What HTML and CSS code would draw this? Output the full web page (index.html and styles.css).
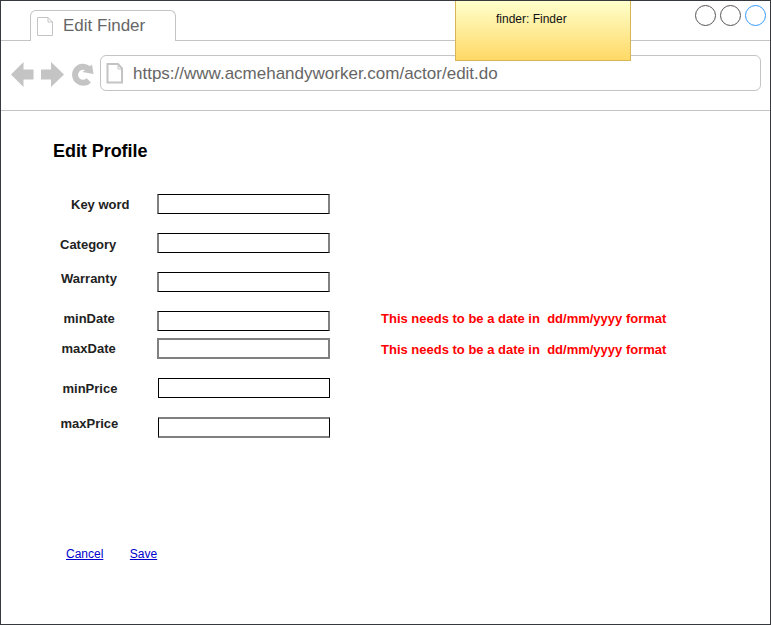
FILE: index.html
```html
<!DOCTYPE html>
<html lang="en">
<head>
<meta charset="utf-8">
<title>Edit Finder</title>
<link rel="stylesheet" href="styles.css">
</head>
<body>
<div class="window">
  <header class="tabbar">
    <div class="tab">
      <svg class="tab-icon" width="17" height="20" viewBox="0 0 17 20"><path d="M.5.5h10.500l4.500 4.500v13.500h-15zM11 .5v4.500h4.500"/></svg>
      <span>Edit Finder</span>
    </div>
    <div class="controls"><i class="dot"></i><i class="dot"></i><i class="dot active"></i></div>
  </header>
  <nav class="toolbar">
    <svg class="nav-icons" width="84" height="26" viewBox="0 0 84 26">
      <path d="M0 12.500L12.500 0v7.500H22.500v10H12.500V25zM30 7.500h10V0l13 12.500L40 25v-7.500H30z"/>
      <path class="reload" d="M77.800 18.300A8 8 0 1 1 77.200 6.600"/>
      <path d="M81 2.500l1.500 9.500-11-2z"/>
    </svg>
    <div class="address">
      <svg class="page-icon" width="18" height="21" viewBox="0 0 18 21"><path d="M1.500 1h10.500l4 4.500V19.500H1.500z"/><path class="fold" d="M12 1v5h4.500"/></svg>
      <span>https://www.acmehandyworker.com/actor/edit.do</span>
    </div>
  </nav>
  <main class="page">
    <h1>Edit Profile</h1>
    <form>
      <div class="row keyword"><label for="keyword">Key word</label><input id="keyword"></div>
      <div class="row category"><label for="category">Category</label><input id="category"></div>
      <div class="row warranty"><label for="warranty">Warranty</label><input id="warranty"></div>
      <div class="row min-date"><label for="min-date">minDate</label><input id="min-date"><span class="error">This needs to be a date in&nbsp; dd/mm/yyyy format</span></div>
      <div class="row max-date"><label for="max-date">maxDate</label><input id="max-date"><span class="error">This needs to be a date in&nbsp; dd/mm/yyyy format</span></div>
      <div class="row min-price"><label for="min-price">minPrice</label><input id="min-price"></div>
      <div class="row max-price"><label for="max-price">maxPrice</label><input id="max-price"></div>
    </form>
    <div class="actions"><a href="#">Cancel</a><a href="#">Save</a></div>
  </main>
  <aside class="note">finder: Finder</aside>
</div>
</body>
</html>
```
FILE: styles.css
```css
* { box-sizing: border-box; }
body {
  margin: 0;
  background: #fff;
  font-family: "Liberation Sans", Arial, sans-serif;
}
.window {
  position: relative;
  width: 771px;
  height: 625px;
  border: 1px solid #36393d;
  overflow: hidden;
}
.tabbar {
  display: flex;
  justify-content: space-between;
  height: 40px;
  padding: 9px 4px 0 29px;
  border-bottom: 1px solid #c4c4c4;
}
.tab {
  display: flex;
  width: 146px;
  height: 31px;
  padding: 6px 0 0 6px;
  border: 1px solid #c4c4c4;
  border-bottom: 0;
  border-radius: 6px 6px 0 0;
  background: #fff;
  color: #666;
  font-size: 17px;
  line-height: 19px;
}
.tab span { margin: -1px 0 0 9px; }
.tab-icon { fill: none; stroke: #c4c4c4; }
.controls { display: flex; gap: 4px; margin-top: -5px; }
.dot {
  width: 21px;
  height: 21px;
  border: 1px solid #555;
  border-radius: 50%;
}
.dot.active { border-color: #3399ff; }
.toolbar {
  display: flex;
  height: 70px;
  padding: 14px 9px 0 10px;
  border-bottom: 1px solid #c4c4c4;
}
.nav-icons { margin: 7px 4px 0 0; fill: #c4c4c4; }
.nav-icons .reload { fill: none; stroke: #c4c4c4; stroke-width: 6; }
.address {
  display: flex;
  flex: 1;
  height: 36px;
  margin-left: 1px;
  padding: 7px 0 0 5px;
  border: 1px solid #c4c4c4;
  border-radius: 6px;
  color: #666;
  font-size: 17px;
  line-height: 19px;
}
.address span { margin: 1px 0 0 9px; }
.page-icon { fill: none; stroke: #c4c4c4; stroke-width: 2; }
.page-icon .fold { stroke-width: 1; }
.page { padding: 30px 0 0 52px; }
h1 {
  height: 53px;
  margin: 0;
  font-size: 18px;
  line-height: 20px;
  letter-spacing: -0.05px;
}
.row { display: flex; align-items: flex-start; height: 20px; }
.row label {
  flex: none;
  width: 104px;
  padding-left: 8px;
  color: #222;
  font-size: 13px;
  font-weight: bold;
  line-height: 15px;
}
.row input {
  width: 173px;
  height: 20px;
  margin: 0;
  padding: 0 3px;
  border: solid;
  border-width: 1px 2px;
  border-color: #000 #808080;
  border-radius: 0;
  background: #fff;
}
.keyword label { margin-top: 3px; padding-left: 18px; }
.category { margin-top: 19px; }
.category label { margin-top: 4px; padding-left: 7px; }
.warranty { margin-top: 19px; }
.warranty label { margin-top: -1px; }
.min-date { margin-top: 19px; }
.min-date label { padding-left: 10.500px; }
.max-date { margin-top: 7px; }
.max-date label { margin-top: 3px; padding-left: 8.500px; }
.max-date input { height: 21px; border: 2px solid #808080; }
.min-price { margin-top: 20px; }
.min-price label { margin-top: 3px; padding-left: 9.500px; }
.max-price { margin-top: 19px; }
.max-price label { margin-top: -1px; padding-left: 7.500px; }
.min-price input, .max-price input {
  width: 172px;
  margin-left: 1px;
  border-width: 1px;
  border-color: #000;
}
.max-price input {
  height: 21px;
  border-width: 2px 1px;
  border-color: #808080 #000;
}
.error {
  margin-left: 51px;
  color: #f00;
  font-size: 13px;
  font-weight: bold;
  line-height: 15px;
  white-space: nowrap;
}
.max-date .error { margin-top: 4px; }
.actions {
  display: flex;
  gap: 26.500px;
  padding: 110px 0 0 13px;
  font-size: 12px;
  line-height: 14px;
}
.actions a { color: #0000cc; }
.note {
  position: absolute;
  top: -1px;
  left: 454px;
  width: 176px;
  height: 61px;
  padding: 11px 0 0 40px;
  border: 1px solid #d6b656;
  background: linear-gradient(#ffffcc, #ffd966);
  color: #111;
  font-size: 12px;
  line-height: 14px;
}
```
